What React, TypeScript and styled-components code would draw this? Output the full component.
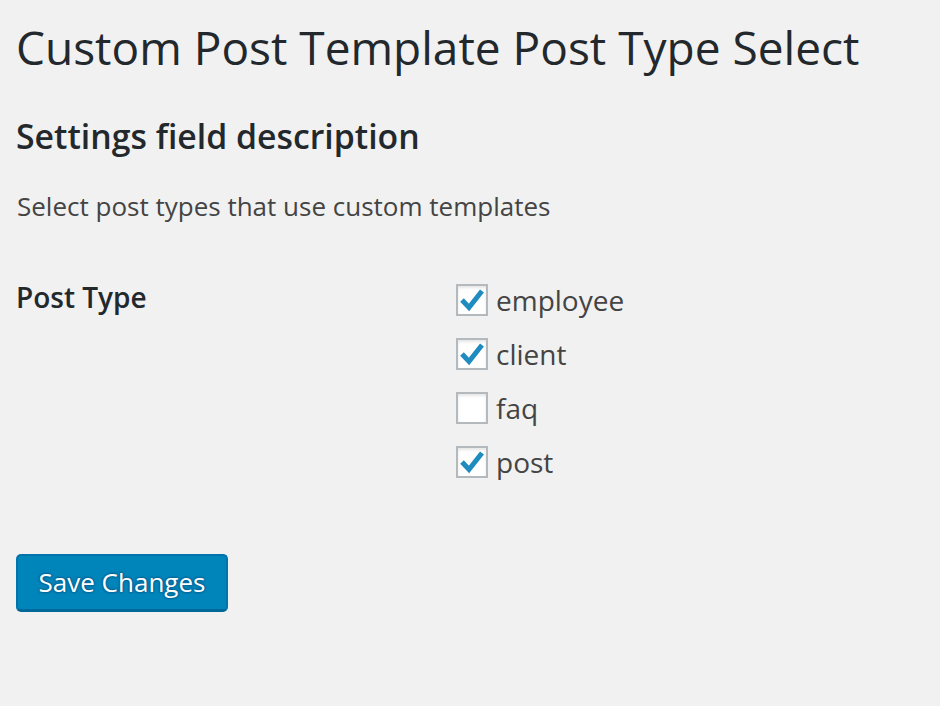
import React from "react";
import styled, { createGlobalStyle } from "styled-components";

const Global = createGlobalStyle`
  html, body { margin: 0; padding: 0; background: #f1f1f1; }
  body { font-family: "Open Sans", "Noto Sans", sans-serif; color: #444; }
`;

const Wrap = styled.div`
  padding: 18px 17px 0 17px;
  display: flex;
  flex-direction: column;
`;

const Title = styled.h1`
  margin: 0 0 0 -1px;
  font-size: 46px;
  line-height: 58px;
  font-weight: 400;
  color: #23282d;
`;

const SectionTitle = styled.h2`
  margin: 40px 0 0 -1px;
  font-size: 33.8px;
  line-height: 40px;
  font-weight: 600;
  color: #23282d;
`;

const Description = styled.p`
  margin: 32px 0 0 0;
  font-size: 26px;
  line-height: 36px;
  color: #444;
`;

const FieldRow = styled.div`
  display: grid;
  grid-template-columns: 439px 1fr;
  margin-top: 58px;
`;

const FieldLabel = styled.div`
  font-size: 28px;
  line-height: 30px;
  font-weight: 600;
  color: #23282d;
  margin-left: -1px;
`;

const Options = styled.div`
  display: flex;
  flex-direction: column;
  gap: 18px;
`;

const Option = styled.label`
  display: flex;
  align-items: center;
  gap: 8px;
  height: 36px;
  font-size: 28px;
  color: #444;
`;

const Box = styled.span`
  box-sizing: border-box;
  width: 32px;
  height: 32px;
  border: 2px solid #b4b9be;
  background: #fff;
  box-shadow: inset 0 2px 3px rgba(0, 0, 0, 0.1);
  display: flex;
  align-items: center;
  justify-content: center;
`;

const SaveButton = styled.button`
  margin-top: 74px;
  margin-left: -1px;
  align-self: flex-start;
  box-sizing: border-box;
  width: 212px;
  height: 58px;
  background: #0085ba;
  border: 2px solid #0073aa;
  border-bottom-color: #006799;
  border-bottom-width: 3px;
  border-radius: 5px;
  color: #fff;
  font-family: "Open Sans", "Noto Sans", sans-serif;
  font-size: 26px;
  text-shadow: 0 -1px 2px #006799, 1px 0 2px #006799, 0 1px 2px #006799, -1px 0 2px #006799;
  padding: 0 0 2px 0;
`;

const Check = () => (
  <svg width="26" height="24" viewBox="0 0 26 24">
    <polyline
      points="3,12 10,19.5 23,3"
      fill="none"
      stroke="#1e8cbe"
      strokeWidth="5"
      strokeLinecap="butt"
      strokeLinejoin="miter"
    />
  </svg>
);

const items = [
  { name: "employee", checked: true },
  { name: "client", checked: true },
  { name: "faq", checked: false },
  { name: "post", checked: true },
];

export default function App() {
  return (
    <>
      <Global />
      <Wrap>
        <Title>Custom Post Template Post Type Select</Title>
        <SectionTitle>Settings field description</SectionTitle>
        <Description>Select post types that use custom templates</Description>
        <FieldRow>
          <FieldLabel>Post Type</FieldLabel>
          <Options>
            {items.map((it) => (
              <Option key={it.name}>
                <Box>{it.checked && <Check />}</Box>
                {it.name}
              </Option>
            ))}
          </Options>
        </FieldRow>
        <SaveButton>Save Changes</SaveButton>
      </Wrap>
    </>
  );
}
